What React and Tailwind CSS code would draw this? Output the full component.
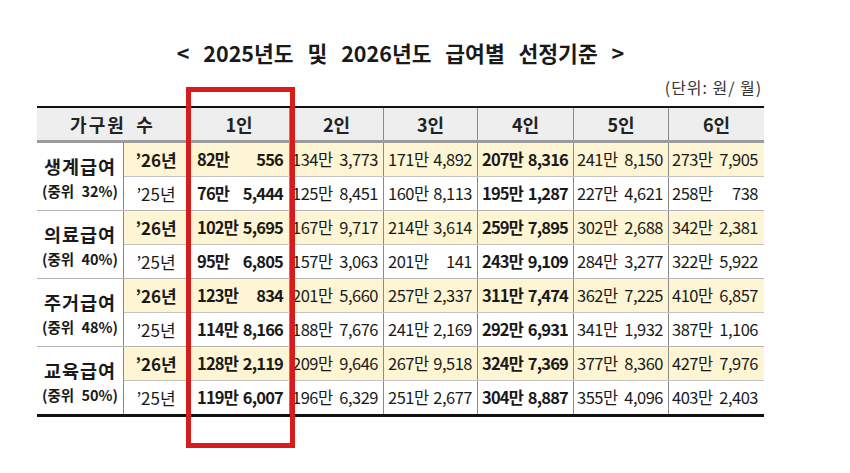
import React from "react";

const groups = [
  {
    name: "생계급여",
    sub: "(중위 32%)",
    rows: [
      ["82만", "556", "134만", "3,773", "171만", "4,892", "207만", "8,316", "241만", "8,150", "273만", "7,905"],
      ["76만", "5,444", "125만", "8,451", "160만", "8,113", "195만", "1,287", "227만", "4,621", "258만", "738"],
    ],
  },
  {
    name: "의료급여",
    sub: "(중위 40%)",
    rows: [
      ["102만", "5,695", "167만", "9,717", "214만", "3,614", "259만", "7,895", "302만", "2,688", "342만", "2,381"],
      ["95만", "6,805", "157만", "3,063", "201만", "141", "243만", "9,109", "284만", "3,277", "322만", "5,922"],
    ],
  },
  {
    name: "주거급여",
    sub: "(중위 48%)",
    rows: [
      ["123만", "834", "201만", "5,660", "257만", "2,337", "311만", "7,474", "362만", "7,225", "410만", "6,857"],
      ["114만", "8,166", "188만", "7,676", "241만", "2,169", "292만", "6,931", "341만", "1,932", "387만", "1,106"],
    ],
  },
  {
    name: "교육급여",
    sub: "(중위 50%)",
    rows: [
      ["128만", "2,119", "209만", "9,646", "267만", "9,518", "324만", "7,369", "377만", "8,360", "427만", "7,976"],
      ["119만", "6,007", "196만", "6,329", "251만", "2,677", "304만", "8,887", "355만", "4,096", "403만", "2,403"],
    ],
  },
];

const colW = ["w-[101px]", "w-[94px]", "w-[94px]", "w-[96px]", "w-[95px]", "w-[96px]"];
const colPad = ["pl-[8px] pr-[6px]", "pl-[2px] pr-[5px]", "pl-[4px] pr-[5px]", "pl-[4px] pr-[5px]", "pl-[3px] pr-[5px]", "pl-[3px] pr-[6px]"];
const heads = ["1인", "2인", "3인", "4인", "5인", "6인"];

function DataRow({ vals, yellow, year, last }) {
  return (
    <div className={`flex ${last ? "h-[33px]" : "h-[34px] border-b border-[#c4c4c4]"} ${yellow ? "bg-[#fdf5d3]" : "bg-white"}`}>
      <div className={`w-[64px] shrink-0 flex items-center justify-center text-[17px] ${yellow ? "font-bold" : "font-normal"} text-[#1a1a1a]`}>
        {year}
      </div>
      {heads.map((h, i) => {
        const bold = i === 0 || i === 3;
        return (
          <div
            key={h}
            className={`${colW[i]} ${colPad[i]} shrink-0 border-l border-[#8a8a8a] flex items-center justify-between text-[16.5px] ${bold ? "font-bold tracking-[-0.05em]" : "font-normal tracking-[-0.03em]"} text-[#1a1a1a]`}
          >
            <span>{vals[i * 2]}</span>
            <span>{vals[i * 2 + 1]}</span>
          </div>
        );
      })}
    </div>
  );
}

export default function App() {
  return (
    <div
      className="relative w-[850px] h-[473px] bg-white overflow-hidden"
      style={{ fontFamily: '"Noto Sans CJK KR", "Noto Sans", sans-serif' }}
    >
      <div className="ml-[37px] w-[727px]">
        <div className="mt-[37px] h-[32px] leading-[32px] text-center text-[21.5px] font-bold text-[#1a1a1a] [word-spacing:9px]">
          &lt; 2025년도 및 2026년도 급여별 선정기준 &gt;
        </div>
        <div className="mt-[7px] h-[22px] leading-[22px] text-right pr-[2px] text-[16px] text-[#333] tracking-[0.06em]">
          (단위: 원/ 월)
        </div>
        <div className="mt-[8px] border-t-[2px] border-[#111] border-b-[3px] border-b-[#111]">
          <div className="flex h-[35px] bg-[#eeeeee] border-b-[3px] border-[#9c9c9c]">
            <div className="w-[151px] shrink-0 flex items-center justify-center text-[18px] font-bold text-[#222] tracking-[0.12em] [word-spacing:4px]">
              가구원 수
            </div>
            {heads.map((h, i) => (
              <div
                key={h}
                className={`${colW[i]} shrink-0 border-l border-[#8a8a8a] flex items-center justify-center text-[18px] font-bold text-[#222]`}
              >
                {h}
              </div>
            ))}
          </div>
          {groups.map((g, gi) => (
            <div key={g.name} className={`flex ${gi < groups.length - 1 ? "border-b border-[#b5b5b5]" : ""}`}>
              <div className="w-[87px] shrink-0 border-r border-[#8a8a8a] flex flex-col items-center justify-center">
                <div className="text-[18.5px] leading-[27px] font-bold text-[#1a1a1a] tracking-[0.05em]">{g.name}</div>
                <div className="text-[14.5px] leading-[21px] font-bold text-[#1a1a1a] [word-spacing:4px]">{g.sub}</div>
              </div>
              <div className="flex flex-col">
                <DataRow vals={g.rows[0]} yellow year="’26년" />
                <DataRow vals={g.rows[1]} year="’25년" last />
              </div>
            </div>
          ))}
        </div>
      </div>
      <div className="absolute left-[186px] top-[87px] w-[109px] h-[361px] border-[5px] border-[#d81c1c]" />
    </div>
  );
}
